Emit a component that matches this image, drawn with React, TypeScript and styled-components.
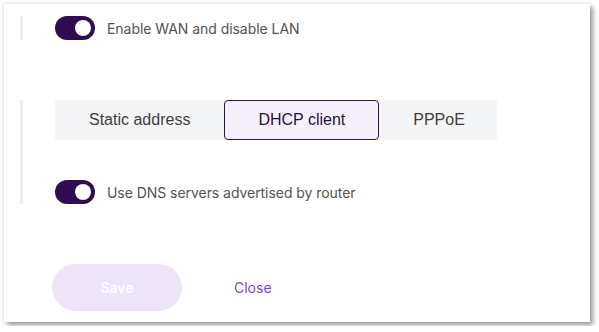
import styled, { createGlobalStyle } from 'styled-components';
import { useState } from 'react';

const GlobalStyle = createGlobalStyle`
  html, body {
    margin: 0;
    padding: 0;
    background: #ffffff;
  }
  body {
    font-family: Inter, "Noto Sans", sans-serif;
  }
`;

const Card = styled.div`
  box-sizing: border-box;
  margin: 4px;
  width: 586px;
  height: 318px;
  background: #ffffff;
  box-shadow: 3px 3px 5px rgba(0, 0, 0, 0.38), 0 0 4px rgba(0, 0, 0, 0.12);
  padding: 12px 0 0 16px;
  display: flex;
  flex-direction: column;
`;

interface SectionProps {
  gap: number;
}

const Section = styled.div<SectionProps>`
  border-left: 3px solid #ebebeb;
  padding-left: 32px;
  display: flex;
  flex-direction: column;
  gap: ${(props) => props.gap}px;
  margin-bottom: 60px;
`;

const ToggleRow = styled.label`
  display: flex;
  align-items: center;
  gap: 12px;
  height: 24px;
  cursor: pointer;
`;

interface SwitchProps {
  on: boolean;
}

const Switch = styled.span<SwitchProps>`
  position: relative;
  display: inline-block;
  width: 40px;
  height: 24px;
  border-radius: 12px;
  background: ${(props) => (props.on ? '#2e0e50' : '#c8c8d0')};

  &::after {
    content: '';
    position: absolute;
    top: 4px;
    left: ${(props) => (props.on ? '20px' : '4px')};
    width: 16px;
    height: 16px;
    border-radius: 50%;
    background: #ffffff;
  }
`;

const ToggleLabel = styled.span`
  font-size: 14px;
  color: #525252;
  letter-spacing: -0.05px;
`;

const Tabs = styled.div`
  display: flex;
  width: 442px;
  height: 40px;
  background: #f4f5f7;
`;

interface TabProps {
  active: boolean;
}

const Tab = styled.button<TabProps>`
  box-sizing: border-box;
  flex-shrink: 0;
  white-space: nowrap;
  height: 40px;
  padding: 0 33px;
  border: 1px solid ${(props) => (props.active ? '#2e0e50' : 'transparent')};
  border-radius: ${(props) => (props.active ? '4px' : '0')};
  background: ${(props) => (props.active ? '#f6f0fd' : 'transparent')};
  font-family: "Liberation Sans", Arial, sans-serif;
  font-size: 16px;
  color: ${(props) => (props.active ? '#25103c' : '#3d3d3d')};
  cursor: pointer;
`;

const Actions = styled.div`
  display: flex;
  align-items: center;
  gap: 52px;
  padding-left: 32px;
`;

const SaveButton = styled.button`
  width: 130px;
  height: 47px;
  border: none;
  border-radius: 24px;
  background: #ede4f8;
  color: #ffffff;
  font-family: Inter, "Noto Sans", sans-serif;
  font-size: 14px;
  font-weight: 600;
  cursor: default;
`;

const CloseButton = styled.button`
  border: none;
  background: none;
  padding: 0;
  color: #7b3fe0;
  font-family: Inter, "Noto Sans", sans-serif;
  font-size: 14px;
  cursor: pointer;
`;

const modes = ['Static address', 'DHCP client', 'PPPoE'];

export default function App() {
  const [wan, setWan] = useState(true);
  const [dns, setDns] = useState(true);
  const [mode, setMode] = useState('DHCP client');

  return (
    <>
      <GlobalStyle />
      <Card>
        <Section gap={0}>
          <ToggleRow onClick={() => setWan(!wan)}>
            <Switch on={wan} />
            <ToggleLabel>Enable WAN and disable LAN</ToggleLabel>
          </ToggleRow>
        </Section>
        <Section gap={40}>
          <Tabs>
            {modes.map((m) => (
              <Tab key={m} active={m === mode} onClick={() => setMode(m)}>
                {m}
              </Tab>
            ))}
          </Tabs>
          <ToggleRow onClick={() => setDns(!dns)}>
            <Switch on={dns} />
            <ToggleLabel>Use DNS servers advertised by router</ToggleLabel>
          </ToggleRow>
        </Section>
        <Actions>
          <SaveButton disabled>Save</SaveButton>
          <CloseButton>Close</CloseButton>
        </Actions>
      </Card>
    </>
  );
}
